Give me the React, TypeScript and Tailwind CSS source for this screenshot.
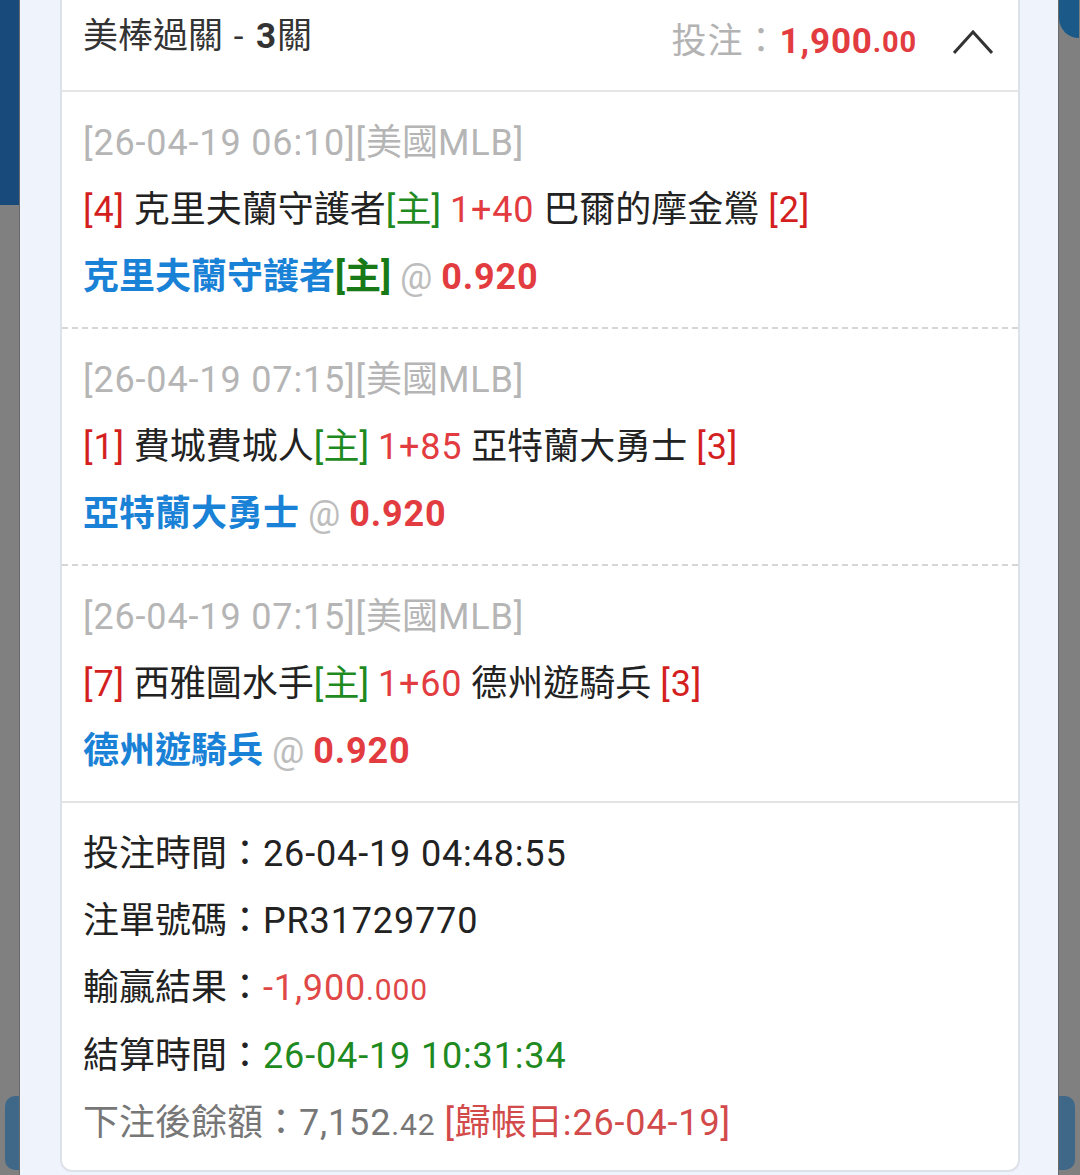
import { Fragment, type ReactNode } from 'react';

const legs = [
  {
    time: '26-04-19 06:10',
    homeNo: '4',
    home: '克里夫蘭守護者',
    line: '1+40',
    away: '巴爾的摩金鶯',
    awayNo: '2',
    pick: '克里夫蘭守護者',
    pickHome: true,
  },
  {
    time: '26-04-19 07:15',
    homeNo: '1',
    home: '費城費城人',
    line: '1+85',
    away: '亞特蘭大勇士',
    awayNo: '3',
    pick: '亞特蘭大勇士',
    pickHome: false,
  },
  {
    time: '26-04-19 07:15',
    homeNo: '7',
    home: '西雅圖水手',
    line: '1+60',
    away: '德州遊騎兵',
    awayNo: '3',
    pick: '德州遊騎兵',
    pickHome: false,
  },
];

// 拉丁字元 / 數字略寬一點
function L({ children, className = '' }: { children: ReactNode; className?: string }) {
  return <span className={'tracking-[0.85px] ' + className}>{children}</span>;
}

export default function App() {
  return (
    <div
      className="flex w-[1080px] h-[1175px] overflow-hidden bg-[#eff4fc] text-[36px] leading-[67px]"
      style={{ fontFamily: 'Roboto, "Noto Sans CJK TC", sans-serif' }}
    >
      {/* 左邊背景條 */}
      <div className="w-[20px] flex flex-col bg-[#808080] border-r border-[#6a6a6a]">
        <div className="h-[205px] bg-[#184a7b]" />
        <div className="flex-1" />
        <div className="ml-[5px] mb-[5px] h-[74px] rounded-l-[10px] bg-[#3f6787]" />
      </div>
      <div className="w-[40px]" />

      {/* 注單卡片 */}
      <div className="w-[960px] h-[1172px] flex flex-col bg-white border-x-2 border-b-2 border-[#dde2ea] rounded-b-[12px]">
        <div className="h-[92px] flex justify-between items-start pl-[21px] pr-[25px] border-b-2 border-[#e6e6e6] shrink-0">
          <div className="pt-[17px] text-[35px] leading-[40px] text-[#333]">
            美棒過關<L className="tracking-[2px]"> - </L>
            <L className="font-bold">3</L>關
          </div>
          <div className="pt-[22px] flex items-center leading-[40px]">
            <span className="text-[#b3b3b3] text-[35px] tracking-[1px]">投注：</span>
            <L className="text-[#e23c40] font-bold text-[35px]">1,900</L>
            <L className="text-[#e23c40] font-bold text-[29px]">.00</L>
            <svg width="40" height="26" viewBox="0 0 40 26" className="ml-[36px]" fill="none">
              <polyline points="1,24 20,3 39,24" stroke="#333" strokeWidth="3" />
            </svg>
          </div>
        </div>

        {legs.map((leg, i) => (
          <Fragment key={i}>
            <div
              className={
                'pl-[21px] pt-[18px] pb-[16px] shrink-0 ' +
                (i < legs.length - 1 ? 'border-b-2 border-dashed border-[#d6d6d6]' : 'border-b-2 border-[#e3e3e3]')
              }
            >
              <div className="text-[#b5b5b5]">
                <L>[{leg.time}][</L>美國<L>MLB]</L>
              </div>
              <div className="text-[#222] whitespace-nowrap">
                <L className="text-[#d41f1f]">[{leg.homeNo}]</L> {leg.home}
                <span className="text-[#1f8a1f]">[主]</span> <L className="text-[#e23c40]">{leg.line}</L> {leg.away}{' '}
                <L className="text-[#d41f1f]">[{leg.awayNo}]</L>
              </div>
              <div className="whitespace-nowrap">
                <span className="text-[#1a82d6] font-bold">{leg.pick}</span>
                {leg.pickHome && <span className="text-[#177a17] font-bold">[主]</span>}{' '}
                <span className="text-[#bdbdbd]">@</span>{' '}
                <L className="text-[#e23c40] font-bold">0.920</L>
              </div>
            </div>
          </Fragment>
        ))}

        <div className="pl-[21px] pt-[18px] text-[#222]">
          <div>
            投注時間：<L>26-04-19 04:48:55</L>
          </div>
          <div>
            注單號碼：<L>PR31729770</L>
          </div>
          <div>
            輸贏結果：<L className="text-[#e04848]">-1,900</L>
            <L className="text-[#e04848] text-[30px]">.000</L>
          </div>
          <div>
            結算時間：<L className="text-[#1f8a1f]">26-04-19 10:31:34</L>
          </div>
          <div className="text-[#777]">
            下注後餘額：<L>7,152</L>
            <L className="text-[30px]">.42</L>{' '}
            <span className="text-[#d24a4a]">
              <L>[</L>歸帳日<L>:26-04-19]</L>
            </span>
          </div>
        </div>
      </div>

      <div className="w-[38px]" />
      {/* 右邊背景條 */}
      <div className="w-[22px] flex flex-col bg-[#808080] border-l border-[#6a6a6a]">
        <div className="h-[38px] w-[20px] rounded-bl-[20px] bg-[#1b5a88]" />
        <div className="flex-1" />
        <div className="mr-[5px] mb-[5px] h-[74px] rounded-r-[10px] bg-[#3f6787]" />
      </div>
    </div>
  );
}
